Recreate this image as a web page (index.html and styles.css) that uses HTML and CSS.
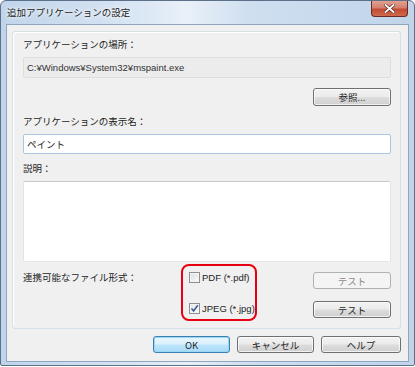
FILE: index.html
```html
<!DOCTYPE html>
<html lang="ja">
<head>
  <meta charset="UTF-8">
  <title>追加アプリケーションの設定</title>
  <link rel="stylesheet" href="styles.css">
</head>
<body>
  <div class="window">
    <div class="titlebar">
      <span class="title">追加アプリケーションの設定</span>
      <button class="close" title="閉じる">
        <svg width="11" height="9" viewBox="0 0 11 9">
          <path d="M1.5 1 L9.5 8 M9.5 1 L1.5 8" stroke="#5a2a22" stroke-width="3.2" stroke-linecap="square"/>
          <path d="M1.5 1 L9.5 8 M9.5 1 L1.5 8" stroke="#fff" stroke-width="1.8" stroke-linecap="square"/>
        </svg>
      </button>
    </div>

    <div class="client">
      <div class="group">
        <p class="label">アプリケーションの場所：</p>
        <div class="field readonly">C:¥Windows¥System32¥mspaint.exe</div>
        <div class="browse-row">
          <button class="btn">参照...</button>
        </div>

        <p class="label">アプリケーションの表示名：</p>
        <div class="field input">ペイント</div>

        <p class="label">説明：</p>
        <div class="field textarea"></div>

        <!-- 連携可能なファイル形式 -->
        <div class="formats">
          <p class="label">連携可能なファイル形式：</p>
          <div class="checks">
            <label class="check"><span class="box"></span>PDF (*.pdf)</label>
            <label class="check"><span class="box checked">
              <svg width="9" height="9" viewBox="0 0 9 9"><path d="M1.5 4.5 L3.6 7 L7.8 1.2" fill="none" stroke="#3d5a9a" stroke-width="1.6"/></svg>
            </span>JPEG (*.jpg)</label>
          </div>
          <div class="tests">
            <button class="btn disabled">テスト</button>
            <button class="btn">テスト</button>
          </div>
        </div>
      </div>

      <div class="footer">
        <button class="btn default">OK</button>
        <button class="btn">キャンセル</button>
        <button class="btn">ヘルプ</button>
      </div>
    </div>
  </div>
</body>
</html>
```

FILE: styles.css
```css
:root {
  --text: #1e1e1e;
  --face: #f0f0f0;
  --frame: #c3d6ec;
}

* {
  margin: 0;
  padding: 0;
  box-sizing: border-box;
}

body {
  background: #ffffff;
  font-family: "Noto Sans CJK JP", "Liberation Sans", sans-serif;
  font-size: 9.5px;
  color: var(--text);
}

.window {
  width: 415px;
  height: 366px;
  border: 1px solid #5d7089;
  border-radius: 6px 6px 2px 2px;
  background: linear-gradient(90deg, #c0d4ea 0%, #d6e4f3 30%, #e9f0f8 45%, #cfdff0 60%, #c0d4ea 100%);
  display: flex;
  flex-direction: column;
  padding: 0 5px 3px 5px;
}

.titlebar {
  height: 23px;
  display: flex;
  align-items: flex-start;
  justify-content: space-between;
}

.title {
  margin-top: 4px;
  margin-left: 1px;
  font-size: 9.5px;
  color: #222;
  text-shadow: 0 0 6px #fff, 0 0 3px #fff;
}

.close {
  width: 37px;
  height: 16px;
  margin-right: 1px;
  border: 1px solid #6b2b24;
  border-top: none;
  border-radius: 0 0 4px 4px;
  background: linear-gradient(#e2a093 0%, #d3806d 45%, #c24a32 55%, #cf6a4d 100%);
  display: flex;
  align-items: center;
  justify-content: center;
}

.client {
  flex: 1;
  border: 1px solid #8fa6c0;
  background: var(--face);
  padding: 6px 7px 0 5px;
  display: flex;
  flex-direction: column;
}

.group {
  height: 298px;
  border: 1px solid #d5dfe5;
  border-radius: 3px;
  box-shadow: inset 1px 1px 0 #fff;
  padding: 5px 9px 0 10px;
}

.label {
  height: 14px;
  line-height: 14px;
}

.field {
  height: 21px;
  margin-top: 6px;
  padding: 0 3px;
  line-height: 19px;
  border: 1px solid #dcdcdc;
  border-radius: 2px;
  font-family: "Liberation Sans", "Noto Sans CJK JP", sans-serif;
}

.readonly {
  background: #ececec;
  border-color: #dedede;
  color: #333;
}

.input {
  height: 20px;
  margin-top: 6px;
  background: #fff;
  border-color: #a9c6e2;
  font-family: "Noto Sans CJK JP", sans-serif;
}

.textarea {
  height: 81px;
  margin-top: 6px;
  background: #fff;
  border-color: #c9c9c9 #e3e3e3 #e8e8e8 #e3e3e3;
}

.browse-row {
  display: flex;
  justify-content: flex-end;
  margin-top: 10px;
  margin-bottom: 8px;
}

.browse-row + .label,
.input + .label {
  margin-top: 0;
}

.input + .label {
  margin-top: 7px;
}

.btn {
  width: 78px;
  height: 18px;
  border: 1px solid #707070;
  border-radius: 3px;
  background: linear-gradient(#f2f2f2 0%, #ebebeb 48%, #dddddd 52%, #cfcfcf 100%);
  box-shadow: inset 0 0 0 1px rgba(255, 255, 255, 0.7);
  font-family: "Noto Sans CJK JP", "Liberation Sans", sans-serif;
  font-size: 9.5px;
  color: var(--text);
  line-height: 14px;
}

.btn.disabled {
  border-color: #adb2b5;
  background: #f4f4f4;
  box-shadow: none;
  color: #8a8a8a;
}

.btn.default {
  border-color: #3c7fb1;
  background: linear-gradient(#eaf6fd 0%, #d9f0fc 48%, #bee6fd 52%, #a7d9f5 100%);
  box-shadow: inset 0 0 0 1px #9ad8f5;
}

.formats {
  display: grid;
  grid-template-columns: 158px 76px 1fr 78px;
  margin-top: 2px;
}

.formats .label {
  margin-top: 6px;
}

.checks {
  height: 57px;
  border: 2px solid #e60012;
  border-radius: 8px;
  padding: 4px 0 0 6px;
  display: flex;
  flex-direction: column;
  gap: 17px;
}

.check {
  height: 14px;
  display: flex;
  align-items: center;
  gap: 2px;
  font-family: "Liberation Sans", sans-serif;
}

.box {
  width: 11px;
  height: 11px;
  border: 1px solid #8e8f8f;
  background: linear-gradient(135deg, #dcdcdc, #fbfbfb);
  box-shadow: inset 0 0 0 1px #f4f4f4;
  display: flex;
  align-items: center;
  justify-content: center;
}

.box.checked {
  background: linear-gradient(135deg, #e4e4e4, #fdfdfd);
}

.tests {
  grid-column: 4;
  display: flex;
  flex-direction: column;
  gap: 12px;
  padding-top: 8px;
}

.tests .btn {
  height: 17px;
}

.footer {
  display: flex;
  justify-content: flex-end;
  gap: 7px;
  margin-top: 7px;
  padding-right: 0;
}

.footer .btn {
  width: 77px;
  height: 17px;
}

.footer .btn:last-child {
  width: 80px;
}
```
